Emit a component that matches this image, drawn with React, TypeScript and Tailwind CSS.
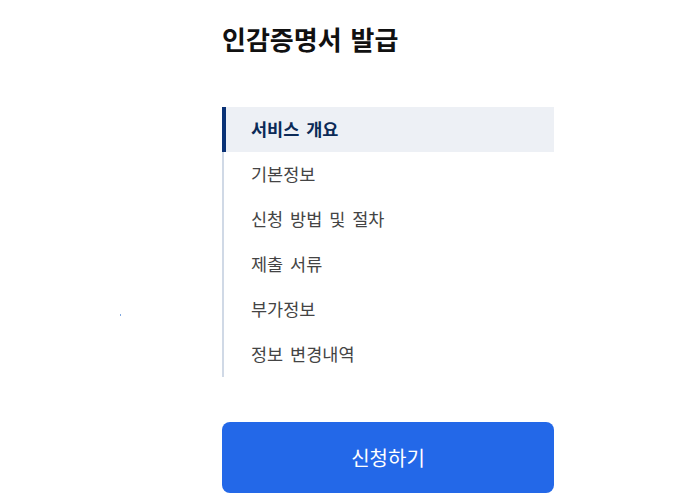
import React from "react";

const items = ["서비스 개요", "기본정보", "신청 방법 및 절차", "제출 서류", "부가정보", "정보 변경내역"];

export default function App() {
  return (
    <div
      className="relative w-[690px] h-[500px] bg-white overflow-hidden"
      style={{ fontFamily: '"Noto Sans CJK KR", "Noto Sans", sans-serif' }}
    >
      <span className="absolute left-[120px] top-[314px] w-px h-[2px] bg-[#7fa8e0]" />
      <div className="ml-[222px] w-[332px] pt-[20px]">
        <h1 className="text-[26px] leading-[38px] font-bold text-[#111111] [word-spacing:3px]">인감증명서 발급</h1>
        <ul className="mt-[49px] border-l-2 border-[#d0d9e6]">
          {items.map((t, i) =>
            i === 0 ? (
              <li
                key={t}
                className="h-[45px] flex items-center bg-[#edf0f5] -ml-[2px] border-l-4 border-[#0a3276] pl-[25px] text-[17.5px] font-bold text-[#0b2a57] [word-spacing:3px]"
              >
                {t}
              </li>
            ) : (
              <li key={t} className="h-[45px] flex items-center pl-[27px] text-[17.5px] text-[#444444] [word-spacing:3px]">
                {t}
              </li>
            )
          )}
        </ul>
        <button className="mt-[45px] w-[332px] h-[71px] rounded-[8px] bg-[#2368e8] text-white text-[20px] flex items-center justify-center">
          신청하기
        </button>
      </div>
    </div>
  );
}
